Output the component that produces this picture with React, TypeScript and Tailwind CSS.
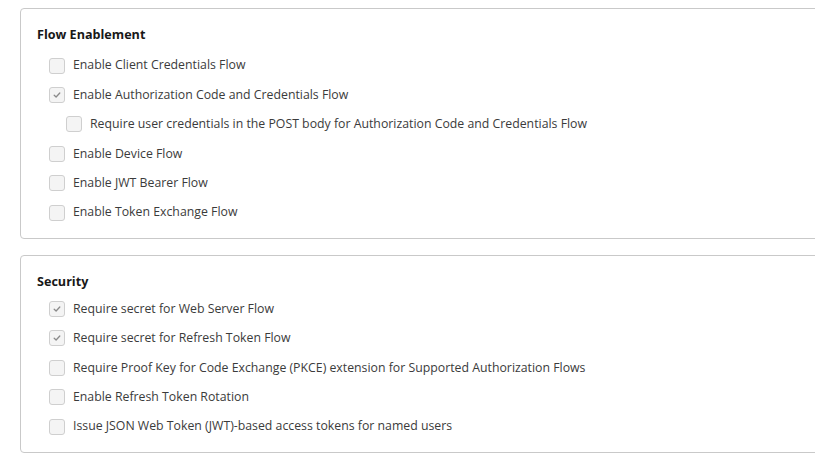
import React from "react";

type Item = { label: string; checked?: boolean; indent?: boolean };

const flowItems: Item[] = [
  { label: "Enable Client Credentials Flow" },
  { label: "Enable Authorization Code and Credentials Flow", checked: true },
  {
    label: "Require user credentials in the POST body for Authorization Code and Credentials Flow",
    indent: true,
  },
  { label: "Enable Device Flow" },
  { label: "Enable JWT Bearer Flow" },
  { label: "Enable Token Exchange Flow" },
];

const securityItems: Item[] = [
  { label: "Require secret for Web Server Flow", checked: true },
  { label: "Require secret for Refresh Token Flow", checked: true },
  { label: "Require Proof Key for Code Exchange (PKCE) extension for Supported Authorization Flows" },
  { label: "Enable Refresh Token Rotation" },
  { label: "Issue JSON Web Token (JWT)-based access tokens for named users" },
];

function Checkbox({ checked }: { checked?: boolean }) {
  return (
    <span className="flex h-[16px] w-[16px] shrink-0 items-center justify-center rounded-[3px] border border-[#cfcfcf] bg-[#f4f4f4]">
      {checked && (
        <svg width="10" height="10" viewBox="0 0 10 10" fill="none">
          <path d="M2.2 5.2 L4.1 7 L7.8 3" stroke="#8a8a8a" strokeWidth="1.3" strokeLinecap="round" strokeLinejoin="round" />
        </svg>
      )}
    </span>
  );
}

function Section({ title, items, firstGap }: { title: string; items: Item[]; firstGap: string }) {
  return (
    <section className="w-[820px] rounded-[4px] border border-[#c9c9c9] bg-white pl-[16px] pt-[17px] pb-[11px]">
      <h3 className="text-[12.6px] font-bold leading-[18px] text-[#181818]">{title}</h3>
      <div className={firstGap}>
        {items.map((it) => (
          <label
            key={it.label}
            className={`flex h-[29.4px] items-center gap-[8px] ${it.indent ? "pl-[29px]" : "pl-[12px]"}`}
          >
            <Checkbox checked={it.checked} />
            <span className="whitespace-nowrap text-[12.3px] text-[#3b3b3b]">{it.label}</span>
          </label>
        ))}
      </div>
    </section>
  );
}

export default function App() {
  return (
    <div
      className="flex h-[460px] w-[815px] flex-col gap-[16px] overflow-hidden bg-white pl-[20px] pt-[8px]"
      style={{ fontFamily: '"Open Sans", "Noto Sans", sans-serif' }}
    >
      <Section title="Flow Enablement" items={flowItems} firstGap="mt-[7px]" />
      <Section title="Security" items={securityItems} firstGap="mt-[3px]" />
    </div>
  );
}
